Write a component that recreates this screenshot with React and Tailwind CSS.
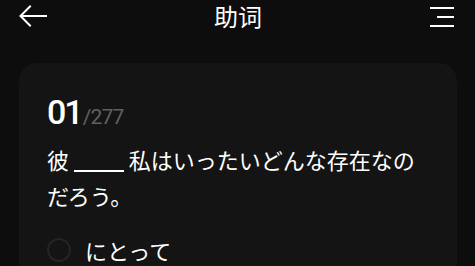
import React from 'react';

const jp = { fontFamily: '"Noto Sans CJK JP", "Noto Sans", sans-serif' };
const num = { fontFamily: 'Roboto, "Liberation Sans", sans-serif' };

const BackIcon = () => (
  <svg width="28" height="22" viewBox="0 0 28 22" fill="none" stroke="white" strokeWidth="2" strokeLinecap="square">
    <path d="M27 11H2" />
    <path d="M11 1.5L1.5 11L11 20.5" />
  </svg>
);

const MenuIcon = () => (
  <svg width="26" height="22" viewBox="0 0 26 22" fill="none" stroke="white" strokeWidth="2">
    <path d="M1 3H25" />
    <path d="M8 12H25" />
    <path d="M1 21H25" />
  </svg>
);

const App = () => {
  const options = ['にとって'];

  return (
    <div className="min-h-screen w-full bg-[#0d0d0d] text-white overflow-hidden" style={jp}>
      <header className="h-[32px] flex items-center justify-between pl-[19px] pr-[20px]">
        <BackIcon />
        <h1 className="text-[24px] leading-[32px] text-white" style={{ fontFamily: '"Noto Sans CJK SC", sans-serif' }}>助词</h1>
        <MenuIcon />
      </header>

      <div className="mt-[31px] ml-[19px] mr-[18px] rounded-[18px] bg-[#141414] pl-[28px] pr-[28px] pt-[32px] pb-10">
        <div className="flex items-baseline h-[34px]">
          <span className="text-[34px] leading-[34px] font-medium tracking-[-2px]" style={num}>01</span>
          <span className="text-[21px] leading-[21px] text-[#606060] tracking-[-0.8px] ml-[1px]" style={num}>/277</span>
        </div>

        <p className="mt-[12px] text-[22px] leading-[36px] text-white">
          彼 <span className="inline-block w-[50px] border-b-[2px] border-white align-[-3px]"></span> 私はいったいどんな存在なのだろう。
        </p>

        <div className="mt-[24px] flex flex-col gap-6">
          {options.map((opt) => (
            <div key={opt} className="flex items-center">
              <span className="w-[24px] h-[24px] rounded-full border-[2px] border-[#242424] shrink-0"></span>
              <span className="ml-[14px] text-[22px] leading-[26px]">{opt}</span>
            </div>
          ))}
        </div>
      </div>
    </div>
  );
};

export default App;
